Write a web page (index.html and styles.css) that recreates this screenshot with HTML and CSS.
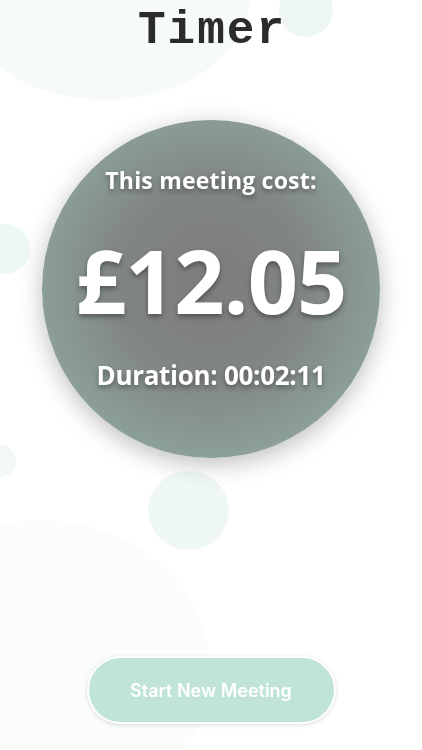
FILE: index.html
```html
<!DOCTYPE html>
<html lang="en">
<head>
    <meta charset="UTF-8">
    <meta name="viewport" content="width=device-width, initial-scale=1.0">
    <title>Timer</title>
    <link rel="stylesheet" href="styles.css">
</head>
<body>
    <div class="bubbles">
        <span class="bubble b1"></span>
        <span class="bubble b2"></span>
        <span class="bubble b3"></span>
        <span class="bubble b4"></span>
        <span class="bubble b5"></span>
        <span class="bubble b6"></span>
    </div>
    <main class="page">
        <h1>Timer</h1>
        <div class="cost-circle">
            <p class="label">This meeting cost:</p>
            <p class="amount">£12.05</p>
            <p class="duration">Duration: 00:02:11</p>
        </div>
        <button class="start-btn" type="button">Start New Meeting</button>
    </main>
</body>
</html>
```

FILE: styles.css
```css
body {
    margin: 0;
    padding: 0;
    background: #ffffff;
    font-family: "Open Sans", Arial, sans-serif;
    overflow: hidden;
}
.bubbles {
    position: fixed;
    inset: 0;
    z-index: 0;
}
.bubble {
    position: absolute;
    border-radius: 50%;
    background: #eef8f4;
}
.b1 { left: -40px; top: -110px; width: 290px; height: 210px; background: #f6fbf8; }
.b2 { left: 279px; top: -17px; width: 54px; height: 54px; background: #eef7f4; }
.b3 { left: -20px; top: 224px; width: 50px; height: 50px; background: #eef8f5; }
.b4 { left: -16px; top: 445px; width: 32px; height: 32px; background: #f1f8f6; }
.b5 { left: 148px; top: 471px; width: 81px; height: 79px; background: #f0f8f5; }
.b6 { left: -130px; top: 520px; width: 340px; height: 300px; background: #fafdfa; }
.page {
    position: relative;
    z-index: 1;
    display: flex;
    flex-direction: column;
    align-items: center;
    height: 750px;
}
h1 {
    margin: 7px 0 0;
    font-family: "Liberation Mono", "Courier New", monospace;
    font-size: 46px;
    line-height: 48px;
    letter-spacing: 2px;
    padding-left: 2px;
    font-weight: bold;
    color: #2b2b2b;
}
.cost-circle {
    margin-top: 65px;
    width: 338px;
    height: 338px;
    border-radius: 50%;
    background: radial-gradient(circle at 50% 48%, #7c7c7c 0%, #818683 40%, #8fa69f 80%, #93ada5 100%);
    box-shadow: 0 6px 24px rgba(0, 0, 0, 0.26);
    display: flex;
    flex-direction: column;
    align-items: center;
    color: #ffffff;
    text-shadow: 0 3px 5px rgba(0, 0, 0, 0.35);
}
.cost-circle p {
    margin: 0;
    font-weight: bold;
}
.label {
    margin-top: 44px !important;
    font-size: 23px;
    letter-spacing: 0.2px;
}
.amount {
    margin-top: 34px !important;
    font-size: 88px;
    line-height: 100px;
    letter-spacing: -1px;
}
.duration {
    margin-top: 27px !important;
    font-size: 26px;
    letter-spacing: -0.3px;
}
.start-btn {
    margin-top: auto;
    margin-bottom: 26px;
    width: 249px;
    height: 68px;
    border-radius: 34px;
    border: 2px solid #ffffff;
    background: #c0e4da;
    color: #ffffff;
    font-family: Inter, "Liberation Sans", Arial, sans-serif;
    font-weight: 600;
    font-size: 18px;
    box-shadow: 0 1px 4px rgba(0, 0, 0, 0.15);
    cursor: pointer;
}
```
